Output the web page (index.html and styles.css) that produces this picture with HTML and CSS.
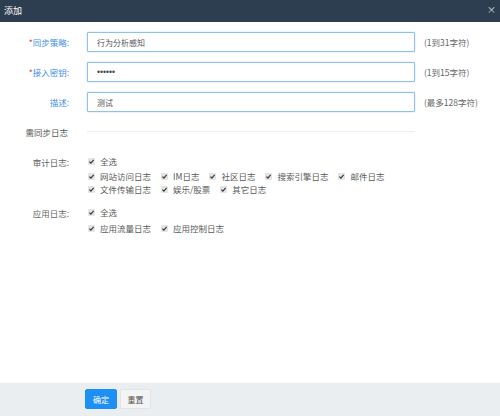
FILE: index.html
```html
<!DOCTYPE html>
<html lang="zh">
<head>
<meta charset="utf-8">
<link rel="stylesheet" href="styles.css">
</head>
<body>
<div class="dialog">
  <div class="header">
    <span class="title">添加</span>
    <span class="close">×</span>
  </div>
  <div class="content">
    <div class="row">
      <label class="label req"><span class="star">*</span>同步策略:</label>
      <input class="input" type="text" value="行为分析感知">
      <span class="hint">(1到31字符)</span>
    </div>
    <div class="row">
      <label class="label req"><span class="star">*</span>接入密钥:</label>
      <input class="input pwd" type="password" value="123456">
      <span class="hint">(1到15字符)</span>
    </div>
    <div class="row">
      <label class="label req">描述:</label>
      <input class="input" type="text" value="测试">
      <span class="hint">(最多128字符)</span>
    </div>
    <div class="section">
      <span class="section-title">需同步日志</span>
      <span class="section-line"></span>
    </div>
    <div class="group audit">
      <div class="group-label">审计日志:</div>
      <div class="options">
        <div class="opt-line all"><span class="cb"><svg viewBox="0 0 7 7"><path d="M1.4 3.6 L2.9 5.1 L5.6 1.9" fill="none" stroke="#333" stroke-width="1.1"/></svg></span>全选</div>
        <div class="opt-line first">
          <span class="item"><span class="cb"><svg viewBox="0 0 7 7"><path d="M1.4 3.6 L2.9 5.1 L5.6 1.9" fill="none" stroke="#333" stroke-width="1.1"/></svg></span>网站访问日志</span>
          <span class="item"><span class="cb"><svg viewBox="0 0 7 7"><path d="M1.4 3.6 L2.9 5.1 L5.6 1.9" fill="none" stroke="#333" stroke-width="1.1"/></svg></span>IM日志</span>
          <span class="item"><span class="cb"><svg viewBox="0 0 7 7"><path d="M1.4 3.6 L2.9 5.1 L5.6 1.9" fill="none" stroke="#333" stroke-width="1.1"/></svg></span>社区日志</span>
          <span class="item"><span class="cb"><svg viewBox="0 0 7 7"><path d="M1.4 3.6 L2.9 5.1 L5.6 1.9" fill="none" stroke="#333" stroke-width="1.1"/></svg></span>搜索引擎日志</span>
          <span class="item"><span class="cb"><svg viewBox="0 0 7 7"><path d="M1.4 3.6 L2.9 5.1 L5.6 1.9" fill="none" stroke="#333" stroke-width="1.1"/></svg></span>邮件日志</span>
        </div>
        <div class="opt-line">
          <span class="item"><span class="cb"><svg viewBox="0 0 7 7"><path d="M1.4 3.6 L2.9 5.1 L5.6 1.9" fill="none" stroke="#333" stroke-width="1.1"/></svg></span>文件传输日志</span>
          <span class="item"><span class="cb"><svg viewBox="0 0 7 7"><path d="M1.4 3.6 L2.9 5.1 L5.6 1.9" fill="none" stroke="#333" stroke-width="1.1"/></svg></span>娱乐/股票</span>
          <span class="item"><span class="cb"><svg viewBox="0 0 7 7"><path d="M1.4 3.6 L2.9 5.1 L5.6 1.9" fill="none" stroke="#333" stroke-width="1.1"/></svg></span>其它日志</span>
        </div>
      </div>
    </div>
    <div class="group app">
      <div class="group-label">应用日志:</div>
      <div class="options">
        <div class="opt-line all"><span class="cb"><svg viewBox="0 0 7 7"><path d="M1.4 3.6 L2.9 5.1 L5.6 1.9" fill="none" stroke="#333" stroke-width="1.1"/></svg></span>全选</div>
        <div class="opt-line first2">
          <span class="item"><span class="cb"><svg viewBox="0 0 7 7"><path d="M1.4 3.6 L2.9 5.1 L5.6 1.9" fill="none" stroke="#333" stroke-width="1.1"/></svg></span>应用流量日志</span>
          <span class="item"><span class="cb"><svg viewBox="0 0 7 7"><path d="M1.4 3.6 L2.9 5.1 L5.6 1.9" fill="none" stroke="#333" stroke-width="1.1"/></svg></span>应用控制日志</span>
        </div>
      </div>
    </div>
  </div>
  <div class="footer">
    <button class="btn primary">确定</button>
    <button class="btn plain">重置</button>
  </div>
</div>
</body>
</html>
```
FILE: styles.css
```css
* { box-sizing: border-box; }
html, body { margin: 0; padding: 0; }
body {
  width: 500px;
  height: 416px;
  font-family: "Noto Sans CJK SC", "Microsoft YaHei", sans-serif;
  font-size: 8.5px;
  color: #5a5a5a;
  background: #fff;
  overflow: hidden;
}
.dialog {
  display: flex;
  flex-direction: column;
  height: 416px;
}
.header {
  height: 22px;
  background: #2d3e50;
  display: flex;
  align-items: center;
  justify-content: space-between;
  padding: 0 4px 0 4px;
  color: #fff;
}
.title { font-size: 9px; line-height: 22px; }
.close { font-size: 9px; color: #dfe4ea; line-height: 22px; margin-top: -3px; }
.content {
  flex: 1;
  padding-top: 10px;
}
.row {
  display: flex;
  align-items: center;
  height: 20px;
  margin-bottom: 10px;
}
.label {
  width: 70px;
  text-align: right;
  color: #3d8ee8;
  padding-right: 1px;
}
.star { color: #e8383a; }
.input {
  margin-left: 17px;
  width: 328px;
  height: 20px;
  border: 1px solid #8fc0ef;
  box-shadow: 0 0 2px rgba(110, 170, 235, 0.45);
  border-radius: 1px;
  padding: 0 9px;
  font-family: "Noto Sans CJK SC", sans-serif;
  font-size: 8px;
  color: #555;
  outline: none;
  background: #fff;
}
.input.pwd {
  font-family: "Liberation Sans", sans-serif;
  font-size: 8.5px;
  color: #444;
}
.hint {
  margin-left: 9px;
  color: #666;
}
.section {
  display: flex;
  align-items: center;
  height: 13px;
  margin-top: 13px;
}
.section-title {
  width: 70px;
  text-align: right;
  padding-right: 2px;
  color: #555;
}
.section-line {
  margin-left: 17px;
  width: 328px;
  height: 1px;
  background: #eceef0;
}
.group {
  display: flex;
}
.audit { margin-top: 17px; }
.app { margin-top: 10px; }
.group-label {
  width: 70px;
  text-align: right;
  padding-right: 1px;
  line-height: 13px;
  margin-top: 1px;
  color: #666;
}
.options {
  margin-left: 18px;
  display: flex;
  flex-direction: column;
}
.opt-line {
  display: flex;
  align-items: center;
  height: 13px;
  line-height: 13px;
}
.opt-line.first { margin-top: 2px; }
.opt-line.first2 { margin-top: 3px; }
.item {
  display: inline-flex;
  align-items: center;
  margin-right: 10px;
}
.cb {
  width: 7px;
  height: 7px;
  background: #e4e4e4;
  border: 0;
  border-radius: 1px;
  margin-right: 5px;
  display: inline-flex;
}
.cb svg { width: 7px; height: 7px; display: block; }
.footer {
  height: 33px;
  background: #ebeef0;
  display: flex;
  align-items: flex-start;
  padding: 6px 0 0 85px;
  gap: 3px;
}
.btn {
  height: 20px;
  font-family: "Noto Sans CJK SC", sans-serif;
  font-size: 8px;
  border-radius: 2px;
  padding: 0;
  cursor: pointer;
}
.primary {
  width: 32px;
  background: #1e8ff5;
  border: 1px solid #1e8ff5;
  color: #fff;
}
.plain {
  width: 31px;
  background: #f4f4f4;
  border: 1px solid #e2e4e6;
  color: #555;
}
```
